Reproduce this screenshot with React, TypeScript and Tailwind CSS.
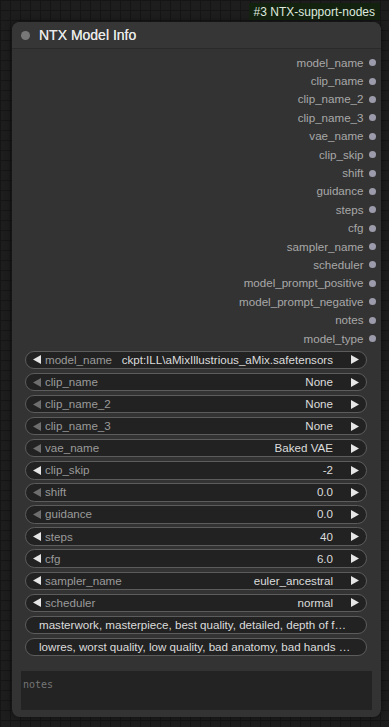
const OUTPUTS = [
  "model_name",
  "clip_name",
  "clip_name_2",
  "clip_name_3",
  "vae_name",
  "clip_skip",
  "shift",
  "guidance",
  "steps",
  "cfg",
  "sampler_name",
  "scheduler",
  "model_prompt_positive",
  "model_prompt_negative",
  "notes",
  "model_type",
];

type Combo = { label: string; value: string; leftOff?: boolean };

const COMBOS: Combo[] = [
  { label: "model_name", value: "ckpt:ILL\\aMixIllustrious_aMix.safetensors" },
  { label: "clip_name", value: "None", leftOff: true },
  { label: "clip_name_2", value: "None", leftOff: true },
  { label: "clip_name_3", value: "None", leftOff: true },
  { label: "vae_name", value: "Baked VAE", leftOff: true },
  { label: "clip_skip", value: "-2" },
  { label: "shift", value: "0.0", leftOff: true },
  { label: "guidance", value: "0.0", leftOff: true },
  { label: "steps", value: "40" },
  { label: "cfg", value: "6.0" },
  { label: "sampler_name", value: "euler_ancestral" },
  { label: "scheduler", value: "normal" },
];

const PROMPTS = [
  "masterwork, masterpiece, best quality, detailed, depth of f…",
  "lowres, worst quality, low quality, bad anatomy, bad hands …",
];

function Arrow({ dir, dim }: { dir: "left" | "right"; dim?: boolean }) {
  return (
    <svg width="8" height="9" viewBox="0 0 8 9" className="shrink-0">
      <path
        d={dir === "left" ? "M8 0 L0 4.5 L8 9 Z" : "M0 0 L8 4.5 L0 9 Z"}
        fill={dim ? "#6e6e6e" : "#e6e6e6"}
      />
    </svg>
  );
}

function ComboWidget({ label, value, leftOff }: Combo) {
  return (
    <div className="flex h-[18.4px] items-center rounded-full border border-[#5c5c5c] bg-[#222222] px-[7px]">
      <Arrow dir="left" dim={leftOff} />
      <span className="ml-[4px] shrink-0 leading-[16px] text-[#9a9a9a]">{label}</span>
      <span className="ml-auto mr-[18px] truncate pl-2 leading-[16px] text-[#dcdcdc]">{value}</span>
      <Arrow dir="right" />
    </div>
  );
}

export default function App() {
  return (
    <div
      className="h-[727px] w-[389px] overflow-hidden bg-[#1d1d1d] bg-[linear-gradient(#151515_1px,transparent_1px),linear-gradient(90deg,#151515_1px,transparent_1px)] bg-[size:10px_10px] pt-[3px] text-[11.6px] leading-none"
      style={{ fontFamily: '"Liberation Sans", Arial, sans-serif' }}
    >
      <div className="flex justify-end pr-[9px]">
        <div className="flex h-[17px] items-center bg-[#13210f] px-[5px] text-[12px] text-[#dfe9df]">
          #3 NTX-support-nodes
        </div>
      </div>

      <div className="ml-[12px] mt-[2px] flex h-[695px] w-[369px] flex-col overflow-hidden rounded-[8px] bg-[#333333] shadow-[0_0_6px_rgba(0,0,0,0.5)]">
        {/* title */}
        <div className="flex h-[27px] shrink-0 items-center border-b border-[#2a2a2a] bg-[#363636] pl-[9px]">
          <div className="h-[9px] w-[9px] rounded-full bg-[#787878]" />
          <span className="ml-[9px] text-[14px] text-[#e8e8e8] [text-shadow:0_0_0.4px_#e8e8e8]">NTX Model Info</span>
        </div>

        {/* outputs */}
        <div className="flex flex-col pt-[4.5px]">
          {OUTPUTS.map((o) => (
            <div key={o} className="flex h-[18.4px] items-center justify-end pr-[5px]">
              <span className="leading-[16px] text-[#a8a8a8]">{o}</span>
              <div className="ml-[5.5px] h-[7px] w-[7px] rounded-full bg-[#9b9bab]" />
            </div>
          ))}
        </div>

        {/* widgets */}
        <div className="mt-[3px] flex flex-col gap-[3.7px] pl-[13px] pr-[14px]">
          {COMBOS.map((c) => (
            <ComboWidget key={c.label} {...c} />
          ))}
          {PROMPTS.map((p) => (
            <div
              key={p}
              className="flex h-[18.4px] items-center rounded-full border border-[#5c5c5c] bg-[#222222] pl-[13px] pr-[8px] text-[#dcdcdc]"
            >
              <span className="truncate leading-[16px]">{p}</span>
            </div>
          ))}
        </div>

        <div className="mx-[9px] mt-[14.5px] h-[39px] bg-[#232323] px-[2px] pt-[7px]">
          <span
            className="text-[10px] text-[#767676]"
            style={{ fontFamily: '"DejaVu Sans Mono", "Liberation Mono", monospace' }}
          >
            notes
          </span>
        </div>
      </div>
    </div>
  );
}
